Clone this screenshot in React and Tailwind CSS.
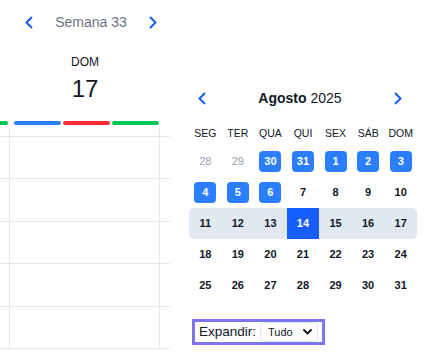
import React from "react"

const WEEKDAYS = ["SEG", "TER", "QUA", "QUI", "SEX", "SÁB", "DOM"]

// each week of agosto 2025, starting monday
const WEEKS = [
  [
    { d: 28, out: true },
    { d: 29, out: true },
    { d: 30, ev: true },
    { d: 31, ev: true },
    { d: 1, ev: true },
    { d: 2, ev: true },
    { d: 3, ev: true },
  ],
  [{ d: 4, ev: true }, { d: 5, ev: true }, { d: 6, ev: true }, { d: 7 }, { d: 8 }, { d: 9 }, { d: 10 }],
  [{ d: 11 }, { d: 12 }, { d: 13 }, { d: 14, today: true }, { d: 15 }, { d: 16 }, { d: 17 }],
  [{ d: 18 }, { d: 19 }, { d: 20 }, { d: 21 }, { d: 22 }, { d: 23 }, { d: 24 }],
  [{ d: 25 }, { d: 26 }, { d: 27 }, { d: 28 }, { d: 29 }, { d: 30 }, { d: 31 }],
]

function Chevron({ dir = "left", className = "" }) {
  const d = dir === "left" ? "M6.5 1.5 L1.5 6.5 L6.5 11.5" : "M1.5 1.5 L6.5 6.5 L1.5 11.5"
  return (
    <svg width="8" height="13" viewBox="0 0 8 13" className={className}>
      <path d={d} fill="none" stroke="currentColor" strokeWidth="2" strokeLinecap="round" strokeLinejoin="round" />
    </svg>
  )
}

function GridColumn({ width, border }) {
  return (
    <div className={`flex flex-col shrink-0 ${width} ${border ? "border-r border-gray-200" : ""}`}>
      <div className="h-[9px] border-b border-gray-200" />
      {[0, 1, 2, 3, 4].map((i) => (
        <div key={i} className="h-[42.4px] border-b border-gray-200" />
      ))}
    </div>
  )
}

function WeekPane() {
  return (
    <div className="w-[170px] shrink-0 flex flex-col overflow-hidden">
      <div className="h-[44px] flex items-center">
        <div className="ml-[25px] w-[132px] flex items-center justify-between">
          <Chevron dir="left" className="text-blue-600" />
          <span className="text-[14px] text-gray-500">Semana 33</span>
          <Chevron dir="right" className="text-blue-600" />
        </div>
      </div>

      <div className="flex">
        <div className="w-[10px]" />
        <div className="w-[150px] flex flex-col items-center">
          <div className="mt-[10px] h-[16px] leading-[16px] text-[12px] text-gray-900">DOM</div>
          <div className="mt-[5px] h-[28px] leading-[28px] text-[24px] text-gray-900">17</div>
        </div>
      </div>

      <div className="flex mt-[18px]">
        <div className="w-[10px] pr-[2px]">
          <div className="h-[4px] rounded-r-full bg-green-500" />
        </div>
        <div className="w-[150px] flex gap-[1.5px] pl-[4px] pr-[1px]">
          <div className="flex-1 h-[4px] rounded-full bg-blue-500" />
          <div className="flex-1 h-[4px] rounded-full bg-red-500" />
          <div className="flex-1 h-[4px] rounded-full bg-green-500" />
        </div>
      </div>

      <div className="flex mt-[3px]">
        <GridColumn width="w-[10px]" border />
        <GridColumn width="w-[150px]" border />
        <GridColumn width="w-[10px]" />
      </div>
    </div>
  )
}

function DayCell({ day }) {
  if (day.today) {
    return (
      <div className="h-full flex items-center justify-center bg-blue-600 text-white font-bold text-[11px]">
        {day.d}
      </div>
    )
  }
  if (day.ev) {
    return (
      <div className="h-full flex items-center justify-center">
        <div className="w-[22px] h-[21px] rounded-[4px] bg-blue-500 text-white font-bold text-[11px] flex items-center justify-center">
          {day.d}
        </div>
      </div>
    )
  }
  return (
    <div
      className={`h-full flex items-center justify-center text-[11px] ${
        day.out ? "text-gray-400" : "font-bold text-gray-900"
      }`}
    >
      {day.d}
    </div>
  )
}

function MonthPane() {
  return (
    <div className="flex-1 flex flex-col pt-[86px] pl-[19px]">
      <div className="w-[222px] h-[24px] px-[9px] flex items-center justify-between">
        <Chevron dir="left" className="text-blue-600" />
        <span className="text-[14px] text-gray-900">
          <span className="font-bold">Agosto</span> 2025
        </span>
        <Chevron dir="right" className="text-blue-600" />
      </div>

      <div className="w-[228px] mt-[12px] grid grid-cols-7 h-[24px]">
        {WEEKDAYS.map((w) => (
          <div key={w} className="flex items-center justify-center text-[10.5px] text-gray-900">
            {w}
          </div>
        ))}
      </div>

      <div className="w-[228px] flex flex-col">
        {WEEKS.map((week, i) => {
          const current = week.some((d) => d.today)
          return (
            <div
              key={i}
              className={`grid grid-cols-7 h-[31px] overflow-hidden ${current ? "bg-slate-200 rounded-[5px]" : ""}`}
            >
              {week.map((day, j) => (
                <DayCell key={j} day={day} />
              ))}
            </div>
          )
        })}
      </div>

      <div className="mt-[18px] ml-[3px] self-start flex items-center gap-[4px] h-[26px] border-[3px] border-[#7c74f0] pl-[4px] pr-[4px] bg-white">
        <span className="text-[13.5px] text-gray-900">Expandir:</span>
        <div className="w-[58px] h-[20px] border border-gray-200 rounded-[4px] bg-white flex items-center justify-between pl-[7px] pr-[5px]">
          <span className="text-[11px] text-gray-900">Tudo</span>
          <svg width="9" height="6" viewBox="0 0 9 6">
            <path d="M1 1 L4.5 4.5 L8 1" fill="none" stroke="#111" strokeWidth="1.8" strokeLinecap="round" strokeLinejoin="round" />
          </svg>
        </div>
      </div>
    </div>
  )
}

export default function App() {
  return (
    <div className="w-[427px] h-[357px] bg-white flex overflow-hidden font-['Liberation_Sans',Arial,sans-serif]">
      <WeekPane />
      <MonthPane />
    </div>
  )
}
